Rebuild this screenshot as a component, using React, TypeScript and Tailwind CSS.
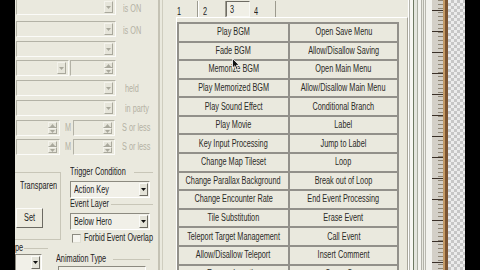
import React from "react";

const leftCmds = [
  "Play BGM",
  "Fade BGM",
  "Memorize BGM",
  "Play Memorized BGM",
  "Play Sound Effect",
  "Play Movie",
  "Key Input Processing",
  "Change Map Tileset",
  "Change Parallax Background",
  "Change Encounter Rate",
  "Tile Substitution",
  "Teleport Target Management",
  "Allow/Disallow Teleport",
  "Escape Location",
];
const rightCmds = [
  "Open Save Menu",
  "Allow/Disallow Saving",
  "Open Main Menu",
  "Allow/Disallow Main Menu",
  "Conditional Branch",
  "Label",
  "Jump to Label",
  "Loop",
  "Break out of Loop",
  "End Event Processing",
  "Erase Event",
  "Call Event",
  "Insert Comment",
  "Game Over",
];

function Txt({ children, center = false, className = "" }: { children: React.ReactNode; center?: boolean; className?: string }) {
  return (
    <span
      className={
        "inline-block whitespace-nowrap scale-x-[0.73] leading-[10px] " +
        (center ? "origin-center " : "origin-left ") +
        className
      }
    >
      {children}
    </span>
  );
}

function DropBtn() {
  return (
    <div className="flex w-[9px] items-end justify-center border border-t-[#f4f3ec] border-l-[#f4f3ec] border-r-[#a9a89c] border-b-[#a9a89c] bg-[#e6e5da] pb-[3px]">
      <svg width="5" height="3" viewBox="0 0 5 3">
        <path d="M0 0h5L2.5 3z" fill="#a9a89c" />
      </svg>
    </div>
  );
}

function SpinBtn() {
  return (
    <div className="flex w-[9px] flex-col">
      <div className="flex flex-1 items-center justify-center border border-t-[#f4f3ec] border-l-[#f4f3ec] border-r-[#a9a89c] border-b-[#a9a89c] bg-[#e6e5da]">
        <svg width="5" height="3" viewBox="0 0 5 3">
          <path d="M0 3h5L2.5 0z" fill="#a9a89c" />
        </svg>
      </div>
      <div className="flex flex-1 items-center justify-center border border-t-[#f4f3ec] border-l-[#f4f3ec] border-r-[#a9a89c] border-b-[#a9a89c] bg-[#e6e5da]">
        <svg width="5" height="3" viewBox="0 0 5 3">
          <path d="M0 0h5L2.5 3z" fill="#a9a89c" />
        </svg>
      </div>
    </div>
  );
}

function Field({ className = "", kind = "drop" }: { className?: string; kind?: "drop" | "spin" }) {
  return (
    <div
      className={
        "flex h-[16px] shrink-0 justify-end border border-t-[#b3b2a6] border-l-[#b3b2a6] border-r-[#fbfbf8] border-b-[#fbfbf8] p-[1px] pr-[2px] " +
        className
      }
    >
      {kind === "drop" ? <DropBtn /> : <SpinBtn />}
    </div>
  );
}

function Gray({ children }: { children: React.ReactNode }) {
  return <Txt className="text-[10px] text-[#b4b1a4]">{children}</Txt>;
}

function Select({ label, className = "" }: { label?: string; className?: string }) {
  return (
    <div
      className={
        "flex h-[17px] items-center justify-between border border-t-[#8c8a80] border-l-[#8c8a80] border-r-[#ffffff] border-b-[#ffffff] bg-[#f1f0e8] pl-[3px] pr-[1px] " +
        className
      }
    >
      <Txt className="text-[10px] text-[#222]">{label}</Txt>
      <div className="flex h-[13px] w-[9px] items-end justify-center border border-t-[#fafaf6] border-l-[#fafaf6] border-r-[#6e6c64] border-b-[#6e6c64] bg-[#e4e3d8] pb-[4px]">
        <svg width="5" height="3" viewBox="0 0 5 3">
          <path d="M0 0h5L2.5 3z" fill="#111" />
        </svg>
      </div>
    </div>
  );
}

function GroupHead({ label, className = "" }: { label: string; className?: string }) {
  return (
    <div className={"flex items-center " + className}>
      <Txt className="text-[10px] text-[#222]">{label}</Txt>
      <div className="ml-[-12px] h-px flex-1 bg-[#c8c6b8]" />
    </div>
  );
}

export default function App() {
  return (
    <div className="relative flex h-[270px] w-[480px] overflow-hidden bg-black font-['Liberation_Sans',Arial,sans-serif] text-[10px] leading-[10px]">
      {/* left black strip */}
      <div className="w-[15px] shrink-0 bg-black" />

      {/* left panel */}
      <div className="flex w-[145px] shrink-0 flex-col overflow-hidden border-r-2 border-r-[#c4c2b4] bg-[#eae9de]">
        <div className="mt-[-1px] flex items-center">
          <Field className="ml-[1px] w-[100px]" />
          <div className="ml-[7px] mt-[3px]"><Gray>is ON</Gray></div>
        </div>
        <div className="mt-[6px] flex items-center">
          <Field className="ml-[1px] w-[100px]" />
          <div className="ml-[7px] mt-[3px]"><Gray>is ON</Gray></div>
        </div>
        <div className="mt-[4px] flex items-center">
          <Field className="ml-[1px] w-[100px]" />
        </div>
        <div className="mt-[3px] flex items-center">
          <Field className="ml-[1px] w-[53px]" />
          <Field className="ml-[1px] w-[46px]" kind="spin" />
        </div>
        <div className="mt-[4px] flex items-center">
          <Field className="ml-[1px] w-[100px]" />
          <div className="ml-[9px] mt-[1px]"><Gray>held</Gray></div>
        </div>
        <div className="mt-[4px] flex items-center">
          <Field className="ml-[1px] w-[100px]" />
          <div className="ml-[9px] mt-[2px]"><Gray>in party</Gray></div>
        </div>
        <div className="mt-[4px] flex items-center">
          <Field className="ml-[1px] w-[44px]" kind="spin" />
          <div className="ml-[5px] w-[10px]"><Gray>M</Gray></div>
          <Field className="w-[42px]" kind="spin" />
          <div className="ml-[7px]"><Gray>S or less</Gray></div>
        </div>
        <div className="mt-[3px] flex items-center">
          <Field className="ml-[1px] w-[44px]" kind="spin" />
          <div className="ml-[5px] w-[10px]"><Gray>M</Gray></div>
          <Field className="w-[42px]" kind="spin" />
          <div className="ml-[7px]"><Gray>S or less</Gray></div>
        </div>

        {/* lower groups */}
        <div className="mt-[13px] flex">
          <div className="mt-[4px] flex h-[68px] w-[46px] shrink-0 flex-col border-t border-r border-b border-[#c8c6b8]">
            <div className="mt-[8px] ml-[5px] flex w-[37px] overflow-hidden">
              <Txt className="text-[10px] text-[#222]">Transparent</Txt>
            </div>
            <div className="mt-[17px] ml-[1px] flex h-[20px] w-[27px] items-center justify-center border border-t-[#fbfbf8] border-l-[#fbfbf8] border-r-[#6c6a62] border-b-[#6c6a62] bg-[#eceade]">
              <Txt center className="text-[10px] text-[#222]">Set</Txt>
            </div>
          </div>
          <div className="ml-[5px] flex w-[87px] flex-col">
            <GroupHead label="Trigger Condition" className="h-[8px] pl-[4px]" />
            <Select label="Action Key" className="mt-[5px] ml-[4px] w-[80px]" />
            <GroupHead label="Event Layer" className="mt-[1px] h-[10px] pl-[4px]" />
            <Select label="Below Hero" className="mt-[4px] ml-[4px] w-[80px]" />
            <div className="mt-[3px] ml-[6px] flex items-center">
              <div className="h-[9px] w-[9px] shrink-0 border border-t-[#8c8a80] border-l-[#8c8a80] border-r-[#e0dfd4] border-b-[#e0dfd4] bg-[#f6f5ef]" />
              <div className="ml-[3px]">
                <Txt className="text-[10px] text-[#222]">Forbid Event Overlap</Txt>
              </div>
            </div>
          </div>
        </div>
        <div className="mt-[1px] flex">
          <div className="flex w-[33px] shrink-0 flex-col">
            <div className="flex h-[8px] items-center">
              <Txt className="text-[10px] text-[#222]">pe</Txt>
              <div className="ml-[-2px] h-px flex-1 bg-[#c8c6b8]" />
            </div>
            <Select label="" className="mt-[2px] w-[27px]" />
          </div>
          <div className="ml-[7px] flex w-[95px] flex-col">
            <div className="h-[7px]" />
            <GroupHead label="Animation Type" className="mt-[4px] h-[8px] pl-[1px]" />
            <div className="mt-[3px] ml-[3px] h-[10px] w-[88px] border border-t-[#8c8a80] border-l-[#8c8a80] border-r-white bg-[#f1f0e8]" />
          </div>
        </div>
      </div>

      {/* main tab dialog */}
      <div className="flex w-[248px] shrink-0 flex-col bg-[#eae9de]">
        <div className="flex h-[20px]">
          <div className="w-[3px] border-r border-r-[#cfcdbf]" />
          {/* tabs */}
          <div className="ml-[7px] flex h-[17px] items-stretch pt-[1px]">
            <div className="flex w-[28px] border-r border-r-[#9c9a8e] pl-[7px] pt-[6px]">
              <Txt className="text-[10px] text-[#222]">1</Txt>
            </div>
            <div className="flex w-[28px] border-l border-l-white border-r border-r-[#9c9a8e] pl-[4px] pt-[6px]">
              <Txt className="text-[10px] text-[#222]">2</Txt>
            </div>
            <div className="flex w-[24px] border border-t-[#6e6c64] border-l-[#6e6c64] border-r-[#f8f8f4] border-b-[#f8f8f4] bg-[#f0efe6] pl-[3px] pt-[3px]">
              <Txt className="text-[10px] text-[#222]">3</Txt>
            </div>
            <div className="flex w-[26px] border-r border-r-[#9c9a8e] pl-[4px] pt-[6px]">
              <Txt className="text-[10px] text-[#222]">4</Txt>
            </div>
          </div>
        </div>
        <div className="flex flex-1">
          <div className="w-[3px] border-r border-r-[#cfcdbf]" />
          <div className="ml-[13px] flex flex-1 flex-col border-t border-l border-t-white border-l-white border-r border-r-[#a8a69a] pt-[4px]">
            <div className="w-[222px] border-t-2 border-l-2 border-[#92908a]">
              {leftCmds.map((l, i) => (
                <div key={i} className="flex h-[18.58px]">
                  <div className="flex w-[111px] items-center justify-center border-r-2 border-b-2 border-[#92908a]">
                    <Txt center className="text-[10px] text-[#2a2a26]">{l}</Txt>
                  </div>
                  <div className="flex w-[109px] items-center justify-center border-r-2 border-b-2 border-[#92908a]">
                    <Txt center className="text-[10px] text-[#2a2a26]">{rightCmds[i]}</Txt>
                  </div>
                </div>
              ))}
            </div>
          </div>
        </div>
      </div>

      {/* window edge stripes */}
      <div className="w-px shrink-0 bg-[#ffffff]" />
      <div className="w-px shrink-0 bg-[#b4b4ac]" />
      <div className="w-[3px] shrink-0 bg-[#f7f7f3]" />
      <div className="w-px shrink-0 bg-[#6d7962]" />
      <div className="w-[3px] shrink-0 bg-[#e4e6de]" />
      <div className="w-px shrink-0 bg-[#a9ada1]" />
      <div className="w-[3px] shrink-0 bg-[#f3f3ef]" />
      <div className="w-px shrink-0 bg-[#b2b2aa]" />
      <div className="w-px shrink-0 bg-[#e8e8e0]" />
      <div className="w-px shrink-0 bg-[#b2b2aa]" />
      <div className="w-px shrink-0 bg-[#efefe9]" />
      <div className="w-px shrink-0 bg-[#b8b8b0]" />
      <div className="w-[6px] shrink-0 bg-[#f2f2ee]" />

      {/* ruler */}
      <div className="relative w-[11px] shrink-0 bg-[#d3cfc7]">
        <div className="absolute inset-y-0 right-0 w-[5px] bg-[repeating-linear-gradient(to_bottom,#8f8676_0_1px,transparent_1px_4px)]" />
        <div className="absolute inset-0 bg-[repeating-linear-gradient(to_bottom,transparent_0_10px,#3a3028_10px_11px,transparent_11px_21px)]" />
      </div>
      <div className="w-[2px] shrink-0 bg-[#c49a66]" />
      <div className="w-[3px] shrink-0 bg-[#7c5532]" />
      {/* checker */}
      <div className="w-[17px] shrink-0 bg-[#e6e6e6] bg-[conic-gradient(#c6c6c6_25%,#ececec_0_50%,#c6c6c6_0_75%,#ececec_0)] bg-size-[6px_6px]" />
      <div className="flex-1 bg-black" />

      {/* mouse cursor */}
      <svg className="absolute left-[232px] top-[58px]" width="8" height="13" viewBox="0 0 8 13">
        <path d="M0.5 0.5 L0.5 10 L2.8 7.8 L4.5 11.8 L6 11.1 L4.4 7.3 L7.2 7.3 Z" fill="#111" stroke="#fff" strokeWidth="0.8" />
      </svg>
    </div>
  );
}
